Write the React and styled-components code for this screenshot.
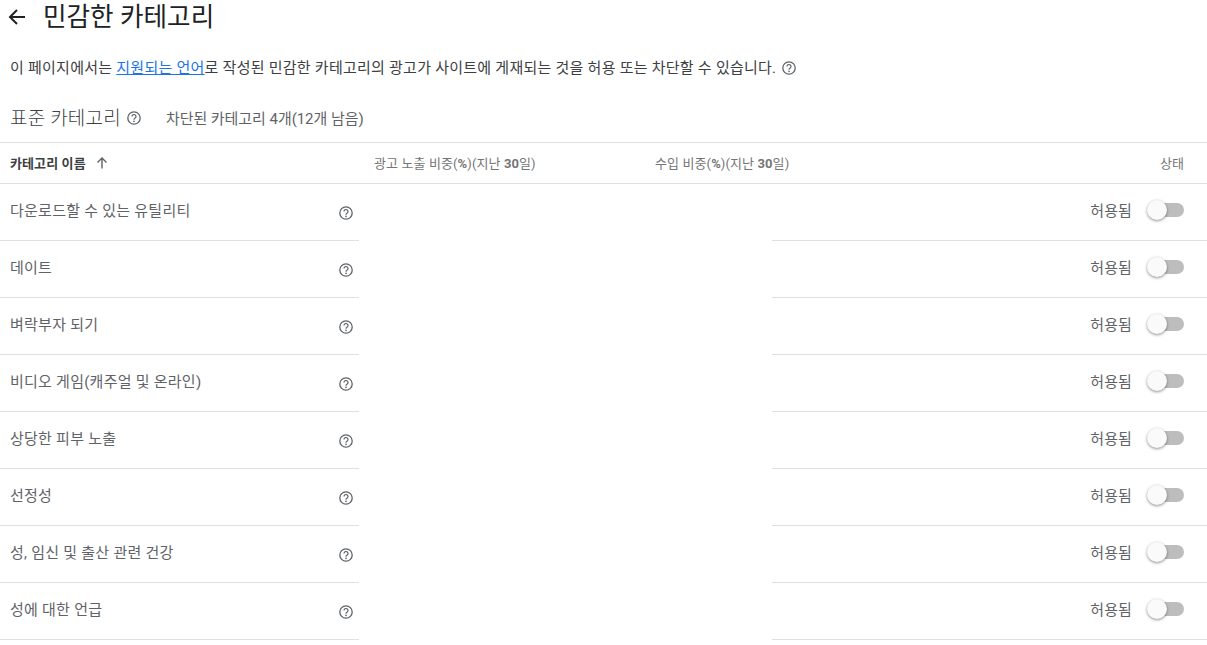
import React from "react";
import styled, { createGlobalStyle } from "styled-components";

const Global = createGlobalStyle`
  html, body { margin: 0; padding: 0; background: #fff; }
  body { width: 1207px; height: 645px; overflow: hidden; font-family: Roboto, "Noto Sans CJK KR", sans-serif; }
`;
const Page = styled.div`display: flex; flex-direction: column; width: 1207px;`;
const TitleBar = styled.header`display: flex; align-items: center; height: 34px; padding-left: 7px; gap: 16px;`;
const Title = styled.h1`margin: 0; font-size: 25.6px; font-weight: 400; color: #202124; line-height: 34px;`;
const Intro = styled.p`margin: 0; padding: 21px 0 0 10px; height: 46px; box-sizing: border-box; display: flex; align-items: center; font-size: 15px; letter-spacing: .25px; line-height: 20px; color: #3c4043; white-space: pre;`;
const Link = styled.a`color: #1a73e8; text-decoration: underline;`;
const Section = styled.div`display: flex; align-items: center; height: 62px; padding: 12px 0 0 10px; box-sizing: border-box;`;
const SectionTitle = styled.h2`margin: 0 0 2px; font-size: 19px; font-weight: 300; color: #3c4043; letter-spacing: .2px;`;
const Count = styled.span`font-size: 15px; color: #5f6368; margin-left: 24px; letter-spacing: -.05px;`;
const Head = styled.div`display: grid; grid-template-columns: 374px 281px 1fr; align-items: center; box-sizing: border-box; height: 42px; padding-bottom: 1px; border-top: 1px solid #e0e0e0; border-bottom: 1px solid #e0e0e0; font-size: 13px; letter-spacing: .1px; color: #757575;`;
const HeadName = styled.div`display: flex; align-items: center; gap: 9px; padding-left: 10px; font-weight: 700; color: #3c4043;`;
const HeadEnd = styled.div`display: flex; justify-content: space-between; padding-right: 23px;`;
const Strong = styled.b`font-weight: 700;`;
const Row = styled.div`display: grid; grid-template-columns: 359px 413px 1fr; height: 57px;`;
const NameCell = styled.div`display: flex; align-items: center; justify-content: space-between; box-sizing: border-box; padding: 0 5px 0 10px; border-bottom: 1px solid #e0e0e0; font-size: 15px; letter-spacing: .25px; color: #5f6368;`;
const NameText = styled.span`position: relative; top: -3px;`;
const Blank = styled.div`background: #fff;`;
const StatusCell = styled.div`display: flex; align-items: center; justify-content: flex-end; box-sizing: border-box; gap: 17px; padding: 0 23px 5px 0; border-bottom: 1px solid #e0e0e0; font-size: 15px; letter-spacing: .1px; color: #5f6368;`;
const Track = styled.div`position: relative; width: 35px; height: 14px; border-radius: 7px; background: #bdbdbd;`;
const Thumb = styled.div`position: absolute; left: -2px; top: -3px; width: 20px; height: 20px; border-radius: 50%; background: #fafafa; box-shadow: 0 1px 3px rgba(0,0,0,.45);`;
const Help = styled.svg`width: 16px; height: 16px; flex: none; fill: none; stroke: #5f6368;`;
const HelpWrap = styled.span`display: inline-flex; margin-left: ${p => p.$ml || 0}px; position: relative; top: ${p => p.$top || 0}px;`;

const HelpIcon = ({ ml, top }) => (
  <HelpWrap $ml={ml} $top={top}>
    <Help viewBox="0 0 16 16">
      <circle cx="8" cy="8" r="6.2" strokeWidth="1.3" />
      <path d="M6 6.5a2 2 0 1 1 3.2 1.6c-.8.55-1.2.9-1.2 1.7" strokeWidth="1.2" />
      <circle cx="8" cy="11.4" r=".8" fill="#5f6368" stroke="none" />
    </Help>
  </HelpWrap>
);

const rows = ["다운로드할 수 있는 유틸리티", "데이트", "벼락부자 되기", "비디오 게임(캐주얼 및 온라인)", "상당한 피부 노출", "선정성", "성, 임신 및 출산 관련 건강", "성에 대한 언급"];

export default function App() {
  return (
    <Page>
      <Global />
      <TitleBar>
        <svg width="20" height="20" viewBox="0 0 20 20" fill="none" stroke="#202124" strokeWidth="2">
          <path d="M18 10H3M10 3l-7 7 7 7" />
        </svg>
        <Title>민감한 카테고리</Title>
      </TitleBar>
      <Intro>이 페이지에서는 <Link>지원되는 언어</Link>로 작성된 민감한 카테고리의 광고가 사이트에 게재되는 것을 허용 또는 차단할 수 있습니다.<HelpIcon ml={5} /></Intro>
      <Section>
        <SectionTitle>표준 카테고리</SectionTitle>
        <HelpIcon ml={5} top={1} />
        <Count>차단된 카테고리 4개(12개 남음)</Count>
      </Section>
      <Head>
        <HeadName>
          카테고리 이름
          <svg width="14" height="14" viewBox="0 0 14 14" fill="none" stroke="#5f6368" strokeWidth="1.4">
            <path d="M7 12.5V2M2.5 6.5 7 2l4.5 4.5" />
          </svg>
        </HeadName>
        <div>광고 노출 비중(<Strong>%</Strong>)(지난 <Strong>30</Strong>일)</div>
        <HeadEnd>
          <span>수입 비중(<Strong>%</Strong>)(지난 <Strong>30</Strong>일)</span>
          <span>상태</span>
        </HeadEnd>
      </Head>
      {rows.map(r => (
        <Row key={r}>
          <NameCell>
            <NameText>{r}</NameText>
            <HelpIcon top={1} />
          </NameCell>
          <Blank />
          <StatusCell>
            허용됨
            <Track><Thumb /></Track>
          </StatusCell>
        </Row>
      ))}
    </Page>
  );
}
